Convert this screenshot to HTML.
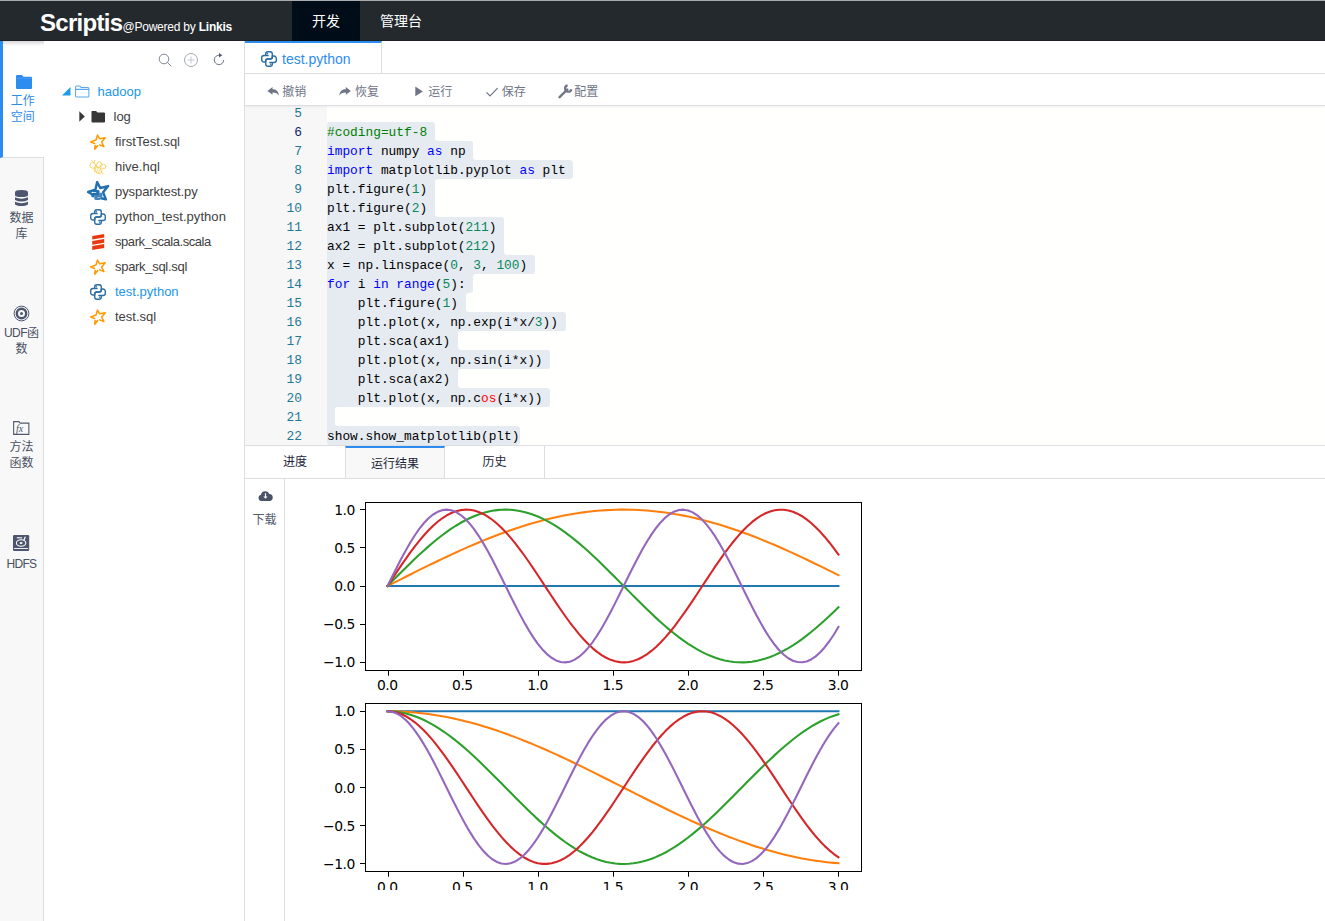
<!DOCTYPE html>
<html lang="zh-CN">
<head>
<meta charset="utf-8">
<title>Scriptis</title>
<style>
*{box-sizing:border-box;margin:0;padding:0}
html,body{width:1325px;height:921px;overflow:hidden;background:#fff}
body{position:relative;font-family:"Liberation Sans","Noto Sans CJK SC",sans-serif;font-size:12px;color:#515a6e}
.abs{position:absolute}
/* header */
#hdr{position:absolute;left:0;top:0;width:1325px;height:41px;background:#24292e;border-top:1px solid #a9abac;border-bottom:1px solid #1c2024}
#logo{position:absolute;left:40px;top:8px;color:#fff;white-space:nowrap;line-height:28px}
#logo b.s{font-size:24px;font-weight:bold;letter-spacing:-0.7px}
#logo span{font-size:12px;letter-spacing:-.22px}
#logo b.l{font-size:12px;font-weight:bold;letter-spacing:-.22px}
.nav{position:absolute;top:0;height:40px;line-height:40px;color:#fff;font-size:14px;text-align:center}
/* sidebar */
#side{position:absolute;left:0;top:41px;width:44px;height:880px;background:#f8f8f9;border-right:1px solid #dcdee2}
.si{position:absolute;left:0;width:43px;text-align:center;font-size:12px;line-height:16px;color:#495060}
.si svg{display:block;margin:0 auto}
#si1{top:0;height:117px;width:44px;background:#fff;border-left:3px solid #2d8cf0;color:#2d8cf0;border-bottom:1px solid #dcdee2}
/* tree */
#tree{position:absolute;left:44px;top:41px;width:201px;height:880px;background:#fff;border-right:1px solid #dcdee2}
.tr{position:absolute;font-size:13px;line-height:25px;height:25px;color:#404040;white-space:nowrap}
.tr.b{color:#2196eb}
.ti{position:absolute}
/* editor area */
#tabbar{position:absolute;left:245px;top:41px;width:1080px;height:33px;border-bottom:1px solid #dcdee2;background:#fff}
#tab1{position:absolute;left:0;top:0;width:137px;height:32px;border-top:2px solid #2d8cf0;border-right:1px solid #dcdee2;color:#2d8cf0;font-size:14px;line-height:30px}
#tool{position:absolute;left:245px;top:74px;width:1080px;height:32px;background:#fff;border-bottom:1px solid #dcdee2;box-shadow:0 1px 2px rgba(0,0,0,.06)}
.tb{position:absolute;top:2.600px;line-height:31px;font-size:12px;color:#6f7586;white-space:nowrap}
#ed{position:absolute;left:245px;top:105px;width:1080px;height:340px;background:#fffffe;overflow:hidden}
#gut{position:absolute;left:0;top:0;width:82px;height:340px;background:#f7f7f7}
.ln,.cl,.sel{position:absolute;height:19px;line-height:19px;font-family:"Liberation Mono","DejaVu Sans Mono",monospace;font-size:12.83px;white-space:pre}
.ln{left:245px;width:57px;text-align:right;color:#237893}
.ln.act{color:#0b216f}
.cl{left:327px;color:#000}
.sel{background:#e5ebf1}
.k{color:#0000ff}.n{color:#09885a}.c{color:#008000}.r{color:#ff0000}
#edwrap{position:absolute;left:0;top:0;width:1325px;height:445px;overflow:hidden}
/* result */
#rtabs{position:absolute;left:245px;top:445px;width:1080px;height:34px;border-top:1px solid #dcdee2;border-bottom:1px solid #dcdee2;background:#fff}
.rt{position:absolute;top:0;width:100px;height:32px;line-height:33.500px;text-align:center;font-size:12px;color:#1c2438}
#rt2{left:100px;background:#f8f8f9;border-top:2px solid #2d8cf0;border-left:1px solid #dcdee2;border-right:1px solid #dcdee2;line-height:33px}
#rt3{left:200px;border-right:1px solid #dcdee2}
#rside{position:absolute;left:245px;top:479px;width:40px;height:442px;border-right:1px solid #dcdee2;text-align:center;font-size:12px;color:#515a6e}
#plotclip{position:absolute;left:0;top:479px;width:1325px;height:411px;overflow:hidden}
</style>
</head>
<body>
<svg width="0" height="0" style="position:absolute"><defs>
<symbol id="py" viewBox="0 0 16 16"><g fill="none" stroke="#2c6da4" stroke-width="1.4" stroke-linejoin="round"><path d="M4.700 4.500V3A2.200 2.200 0 0 1 6.900.8H9.100A2.200 2.200 0 0 1 11.300 3V6A2 2 0 0 1 9.300 8H6.700A2 2 0 0 0 4.700 10V11H3A2.300 2.300 0 0 1 .7 8.700V6.800A2.300 2.300 0 0 1 3 4.500H7.700"/><path d="M11.300 11.500V13A2.200 2.200 0 0 1 9.100 15.200H6.900A2.200 2.200 0 0 1 4.700 13V10A2 2 0 0 1 6.700 8H9.300A2 2 0 0 0 11.300 6V5H13A2.300 2.300 0 0 1 15.300 7.300V9.200A2.300 2.300 0 0 1 13 11.500H8.300"/></g><circle cx="6.400" cy="2.800" r=".7" fill="#2c6da4"/><circle cx="9.600" cy="13.200" r=".7" fill="#2c6da4"/></symbol>
<symbol id="star" viewBox="0 0 24 24"><g fill="none" stroke="#ff9a00" stroke-width="1.600" stroke-linejoin="round" stroke-linecap="round"><path d="M8.100 13.300L3.900 11.700L9.600 9.600L11.200 4.300L13.500 8.300L19.500 7.200L15.600 11.700L18 16.700L13.500 14.800"/><path d="M8.600 15.400L8.300 19.500L11.500 15.600" fill="#ff9a00"/></g></symbol>
<symbol id="pys" viewBox="0 0 28 28"><g fill="none" stroke="#2270b0" stroke-width="2.600" stroke-linejoin="round" stroke-linecap="round"><path d="M8.500 17L3.300 14L11.200 11.500L13.100 3.300L16.400 9.700L24.900 7.600L19.500 14.300L22.500 21.900L17.600 20.700"/></g><g fill="#2270b0" transform="translate(12.800 17.200) scale(1.180) translate(-13.100 -18.500)"><path d="M10.700 14h3.600q1.200 0 1.200 1.200v2.200q0 1.200-1.200 1.200h-2.600q-1 0-1 1v1h-1.500q-1.200 0-1.200-1.200v-1.600q0-1.200 1.200-1.200h3.300v-.5h-2.900v-.9q0-1.200 1.100-1.200z"/><path d="M15.500 23h-3.600q-1.200 0-1.200-1.200v-2.200q0-1.200 1.200-1.200h2.600q1 0 1-1v-1h1.500q1.200 0 1.200 1.200v1.600q0 1.200-1.200 1.200h-3.300v.5h2.900v.9q0 1.200-1.100 1.200z" opacity=".85"/></g></symbol>
<symbol id="hive" viewBox="0 0 24 24"><g fill="none" stroke="#f6c945" stroke-width=".9" stroke-linecap="round" opacity=".85"><circle cx="6.800" cy="10.400" r="2.900"/><path d="M7.300 7.500L5.800 5.400M8.200 7.400L9 5.200"/><ellipse cx="13" cy="9.600" rx="2.200" ry="3" transform="rotate(25 13 9.600)"/><ellipse cx="17.300" cy="11.500" rx="2.600" ry="2.300"/><ellipse cx="12" cy="15.200" rx="4.300" ry="2.900" transform="rotate(35 12 15.200)"/><path d="M10.300 12.200L8.600 16.200M12.500 12.600L10.300 17.600M14.600 13.800L12.400 18.300M15.600 17L17.200 18.800"/></g></symbol>
<symbol id="scala" viewBox="0 0 24 24"><g fill="#e8380d"><path d="M6.250 6L18.200 3.900V7.550L6.250 9.600z"/><path d="M6.250 10.900L18.200 9V12.800L6.250 14.800z"/><path d="M6.250 16.100L18.200 14V18L6.250 20z"/></g></symbol>
</defs></svg>
<div id="edwrap">
<div id="ed"><div id="gut"></div></div>
<div class="abs" style="left:327px;top:293px;width:1px;height:114px;background:#d3d3d3"></div>
<div class="ln" style="top:104px">5</div>
<div class="ln act" style="top:123px">6</div>
<div class="sel" style="top:122px;left:327px;width:107.8px;border-radius:3px 3px 0px 0px"></div>
<div class="abs" style="left:434.8px;top:138px;width:3px;height:3px;background:radial-gradient(circle at 100% 0%,rgba(229,235,241,0) 2.5px,#e5ebf1 3.5px)"></div>
<div class="cl" style="top:123px"><span class="c">#coding=utf-8</span></div>
<div class="ln" style="top:142px">7</div>
<div class="sel" style="top:141px;left:327px;width:146.3px;border-radius:0px 3px 0px 0px"></div>
<div class="abs" style="left:473.3px;top:157px;width:3px;height:3px;background:radial-gradient(circle at 100% 0%,rgba(229,235,241,0) 2.5px,#e5ebf1 3.5px)"></div>
<div class="cl" style="top:142px"><span class="k">import</span> numpy <span class="k">as</span> np</div>
<div class="ln" style="top:161px">8</div>
<div class="sel" style="top:160px;left:327px;width:246.4px;border-radius:0px 3px 3px 0px"></div>
<div class="cl" style="top:161px"><span class="k">import</span> matplotlib.pyplot <span class="k">as</span> plt</div>
<div class="ln" style="top:180px">9</div>
<div class="sel" style="top:179px;left:327px;width:107.8px;border-radius:0px 0px 0px 0px"></div>
<div class="abs" style="left:434.8px;top:179px;width:3px;height:3px;background:radial-gradient(circle at 100% 100%,rgba(229,235,241,0) 2.5px,#e5ebf1 3.5px)"></div>
<div class="cl" style="top:180px">plt.figure(<span class="n">1</span>)</div>
<div class="ln" style="top:199px">10</div>
<div class="sel" style="top:198px;left:327px;width:107.8px;border-radius:0px 0px 0px 0px"></div>
<div class="abs" style="left:434.8px;top:214px;width:3px;height:3px;background:radial-gradient(circle at 100% 0%,rgba(229,235,241,0) 2.5px,#e5ebf1 3.5px)"></div>
<div class="cl" style="top:199px">plt.figure(<span class="n">2</span>)</div>
<div class="ln" style="top:218px">11</div>
<div class="sel" style="top:217px;left:327px;width:177.1px;border-radius:0px 3px 0px 0px"></div>
<div class="cl" style="top:218px">ax1 = plt.subplot(<span class="n">211</span>)</div>
<div class="ln" style="top:237px">12</div>
<div class="sel" style="top:236px;left:327px;width:177.1px;border-radius:0px 0px 0px 0px"></div>
<div class="abs" style="left:504.1px;top:252px;width:3px;height:3px;background:radial-gradient(circle at 100% 0%,rgba(229,235,241,0) 2.5px,#e5ebf1 3.5px)"></div>
<div class="cl" style="top:237px">ax2 = plt.subplot(<span class="n">212</span>)</div>
<div class="ln" style="top:256px">13</div>
<div class="sel" style="top:255px;left:327px;width:207.9px;border-radius:0px 3px 3px 0px"></div>
<div class="cl" style="top:256px">x = np.linspace(<span class="n">0</span>, <span class="n">3</span>, <span class="n">100</span>)</div>
<div class="ln" style="top:275px">14</div>
<div class="sel" style="top:274px;left:327px;width:146.3px;border-radius:0px 0px 3px 0px"></div>
<div class="abs" style="left:473.3px;top:274px;width:3px;height:3px;background:radial-gradient(circle at 100% 100%,rgba(229,235,241,0) 2.5px,#e5ebf1 3.5px)"></div>
<div class="cl" style="top:275px"><span class="k">for</span> i <span class="k">in</span> <span class="k">range</span>(<span class="n">5</span>):</div>
<div class="ln" style="top:294px">15</div>
<div class="sel" style="top:293px;left:327px;width:138.6px;border-radius:0px 0px 0px 0px"></div>
<div class="abs" style="left:465.6px;top:309px;width:3px;height:3px;background:radial-gradient(circle at 100% 0%,rgba(229,235,241,0) 2.5px,#e5ebf1 3.5px)"></div>
<div class="abs" style="left:465.6px;top:293px;width:3px;height:3px;background:radial-gradient(circle at 100% 100%,rgba(229,235,241,0) 2.5px,#e5ebf1 3.5px)"></div>
<div class="cl" style="top:294px">    plt.figure(<span class="n">1</span>)</div>
<div class="ln" style="top:313px">16</div>
<div class="sel" style="top:312px;left:327px;width:238.7px;border-radius:0px 3px 3px 0px"></div>
<div class="cl" style="top:313px">    plt.plot(x, np.exp(i*x/<span class="n">3</span>))</div>
<div class="ln" style="top:332px">17</div>
<div class="sel" style="top:331px;left:327px;width:130.9px;border-radius:0px 0px 0px 0px"></div>
<div class="abs" style="left:457.9px;top:347px;width:3px;height:3px;background:radial-gradient(circle at 100% 0%,rgba(229,235,241,0) 2.5px,#e5ebf1 3.5px)"></div>
<div class="abs" style="left:457.9px;top:331px;width:3px;height:3px;background:radial-gradient(circle at 100% 100%,rgba(229,235,241,0) 2.5px,#e5ebf1 3.5px)"></div>
<div class="cl" style="top:332px">    plt.sca(ax1)</div>
<div class="ln" style="top:351px">18</div>
<div class="sel" style="top:350px;left:327px;width:223.3px;border-radius:0px 3px 3px 0px"></div>
<div class="cl" style="top:351px">    plt.plot(x, np.sin(i*x))</div>
<div class="ln" style="top:370px">19</div>
<div class="sel" style="top:369px;left:327px;width:130.9px;border-radius:0px 0px 0px 0px"></div>
<div class="abs" style="left:457.9px;top:385px;width:3px;height:3px;background:radial-gradient(circle at 100% 0%,rgba(229,235,241,0) 2.5px,#e5ebf1 3.5px)"></div>
<div class="abs" style="left:457.9px;top:369px;width:3px;height:3px;background:radial-gradient(circle at 100% 100%,rgba(229,235,241,0) 2.5px,#e5ebf1 3.5px)"></div>
<div class="cl" style="top:370px">    plt.sca(ax2)</div>
<div class="ln" style="top:389px">20</div>
<div class="sel" style="top:388px;left:327px;width:223.3px;border-radius:0px 3px 3px 0px"></div>
<div class="cl" style="top:389px">    plt.plot(x, np.c<span class="r">os</span>(i*x))</div>
<div class="ln" style="top:408px">21</div>
<div class="sel" style="top:407px;left:327px;width:7.7px;border-radius:0px 0px 0px 0px"></div>
<div class="abs" style="left:334.7px;top:423px;width:3px;height:3px;background:radial-gradient(circle at 100% 0%,rgba(229,235,241,0) 2.5px,#e5ebf1 3.5px)"></div>
<div class="abs" style="left:334.7px;top:407px;width:3px;height:3px;background:radial-gradient(circle at 100% 100%,rgba(229,235,241,0) 2.5px,#e5ebf1 3.5px)"></div>
<div class="ln" style="top:427px">22</div>
<div class="sel" style="top:426px;left:327px;width:192.5px;border-radius:0px 3px 3px 3px"></div>
<div class="cl" style="top:427px">show.show_matplotlib(plt)</div>
</div>
<div id="hdr">
  <div id="logo"><b class="s">Scriptis</b><span>@Powered by </span><b class="l">Linkis</b></div>
  <div class="nav" style="left:292px;width:68px;background:#000c17">开发</div>
  <div class="nav" style="left:361px;width:80px">管理台</div>
</div>

<div id="side">
  <div class="si" id="si1"><div style="position:absolute;left:0;top:0;width:41px;height:6px;background:linear-gradient(to bottom,rgba(0,0,0,.16),rgba(0,0,0,.04) 60%,rgba(0,0,0,0))"></div><div style="height:34px"></div>
    <svg width="16.200" height="14" viewBox="0 0 17 14" preserveAspectRatio="none" style="margin-left:12.800px"><path d="M1.200 0h5l1.600 1.800h8q1.200 0 1.200 1.200v9.800q0 1.200-1.200 1.200H1.200Q0 14 0 12.800V1.200Q0 0 1.200 0z" fill="#2d8cf0"/><path d="M.3 3.300H16.700" stroke="#5ba6f4" stroke-width=".6"/></svg>
    <div style="margin-top:4px;margin-left:-1.400px">工作<br>空间</div></div>
  <div class="si" style="top:148.800px"><svg width="13" height="16.200" viewBox="0 0 13 16.200"><g fill="#4d566e"><path d="M0 2.200Q0 0 6.500 0Q13 0 13 2.200V5.200Q13 7 6.500 7Q0 7 0 5.200z"/><path d="M0 7.300Q3 8.700 6.500 8.700Q10 8.700 13 7.300V10Q10 11.600 6.500 11.600Q3 11.600 0 10z"/><path d="M0 11.800Q3 13.200 6.500 13.200Q10 13.200 13 11.800V14.400Q10 16.200 6.500 16.200Q3 16.200 0 14.400z"/></g></svg>
    <div style="margin-top:4px">数据<br>库</div></div>
  <div class="si" style="top:263.800px"><svg width="17" height="17" viewBox="0 0 17 17"><g fill="none" stroke="#4d566e"><circle cx="8.500" cy="8.500" r="7.400" stroke-width="1"/><circle cx="8.500" cy="8.500" r="4.700" stroke-width="2.400"/></g><circle cx="8.500" cy="8.500" r="1.500" fill="#4d566e"/></svg>
    <div style="margin-top:3.500px"><span style="letter-spacing:-.6px">UDF</span>函<br>数</div></div>
  <div class="si" style="top:380px"><svg width="16.500" height="14" viewBox="0 0 18 15" preserveAspectRatio="none"><path d="M.7 14.300V.7h5.800l1.300 1.600h9.500v12z" fill="none" stroke="#515a6e" stroke-width="1.2"/><text x="3.300" y="12" font-family="'Liberation Serif',serif" font-style="italic" font-size="11" fill="#4d566e">fx</text></svg>
    <div style="margin-top:4px">方法<br>函数</div></div>
  <div class="si" style="top:494px"><svg width="16.200" height="16" viewBox="0 0 16.200 16"><rect x="0" y="0" width="16.200" height="16" rx="1.300" fill="#4d566e"/><g fill="none" stroke="#fff"><path d="M1 13.500H15.200" stroke-width=".9"/><ellipse cx="8.100" cy="8" rx="4.700" ry="3.300" stroke-width="1.100"/><path d="M3.800 2.800H9.200" stroke-width="1.100"/><path d="M12.300 1.800L10.800 5.400" stroke-width="1.200"/></g><ellipse cx="8.100" cy="8" rx="1.500" ry=".9" fill="#fff"/></svg>
    <div style="margin-top:4.500px;letter-spacing:-.7px">HDFS</div></div>
</div>

<div id="tree"><div style="position:absolute;left:1px;top:0">
<svg class="ti" style="left:112px;top:11px" width="16" height="16" viewBox="0 0 16 16"><g fill="none" stroke="#808695" stroke-width="1"><circle cx="7" cy="7" r="4.800"/><path d="M10.500 10.500L14 14" stroke-linecap="round"/></g></svg>
<svg class="ti" style="left:138px;top:11px" width="16" height="16" viewBox="0 0 16 16"><g fill="none" stroke="#a4a9b5" stroke-width="1"><circle cx="8" cy="8" r="6.500"/><path d="M8 4.500V11.500M4.500 8H11.500" stroke="#c5c8ce"/></g></svg>
<svg class="ti" style="left:166px;top:11px" width="16" height="16" viewBox="0 0 16 16"><g fill="none" stroke="#6b7182" stroke-width="1"><path d="M8.800 3.300A4.700 4.700 0 1 0 12.700 8"/></g><path d="M8 .9L11.300 3.300L8 5.600z" fill="#515a6e"/></svg>
<div class="tr b" style="left:52.5px;top:38px">hadoop</div>
<svg class="ti" style="left:17.0px;top:46.2px" width="9" height="9" viewBox="0 0 9 9"><path d="M8.500 0V8.500H0z" fill="#1e9bea"/></svg>
<svg class="ti" style="left:29.8px;top:44.0px" width="14.800" height="13.400" viewBox="0 0 16 14" preserveAspectRatio="none"><path d="M.6 2.200Q.6 1.100 1.700 1.100H5.200L6.600 2.600H13.900Q15 2.600 15 3.700V11.400Q15 12.500 13.900 12.500H1.700Q.6 12.500.6 11.400zM.6 4.600H15" fill="none" stroke="#5aa6f2" stroke-width="1.100"/></svg>
<div class="tr " style="left:68.5px;top:63px">log</div>
<svg class="ti" style="left:34.0px;top:70.0px" width="7" height="11" viewBox="0 0 7 11"><path d="M.3.300L5.800 5.500L.3 10.700z" fill="#3a3a3a"/></svg>
<svg class="ti" style="left:45.5px;top:70.0px" width="14.600" height="12" viewBox="0 0 15 12" preserveAspectRatio="none"><path d="M1 0H5.200L6.700 1.500H13.500Q14.500 1.500 14.500 2.500V10.500Q14.500 11.500 13.500 11.500H1.500Q.5 11.500.5 10.500V.8Q.5 0 1 0z" fill="#363636"/></svg>
<div class="tr " style="left:70.0px;top:88px">firstTest.sql</div>
<svg class="ti" style="left:42.0px;top:89.6px" width="22.500" height="22.500"><use href="#star"/></svg>
<div class="tr " style="left:70.0px;top:113px">hive.hql</div>
<svg class="ti" style="left:41.0px;top:113.8px" width="24" height="24"><use href="#hive"/></svg>
<div class="tr " style="left:70.0px;top:138px;letter-spacing:-.08px">pysparktest.py</div>
<svg class="ti" style="left:40.0px;top:138.0px" width="26" height="26"><use href="#pys"/></svg>
<div class="tr " style="left:70.0px;top:163px;letter-spacing:.06px">python_test.python</div>
<svg class="ti" style="left:45.0px;top:167.8px" width="16" height="16"><use href="#py"/></svg>
<div class="tr " style="left:70.0px;top:188px;letter-spacing:-.44px">spark_scala.scala</div>
<svg class="ti" style="left:41.0px;top:188.8px" width="24" height="24"><use href="#scala"/></svg>
<div class="tr " style="left:70.0px;top:213px;letter-spacing:-.3px">spark_sql.sql</div>
<svg class="ti" style="left:42.0px;top:214.6px" width="22.500" height="22.500"><use href="#star"/></svg>
<div class="tr b" style="left:70.0px;top:238px">test.python</div>
<svg class="ti" style="left:45.0px;top:242.8px" width="16" height="16"><use href="#py"/></svg>
<div class="tr " style="left:70.0px;top:263px">test.sql</div>
<svg class="ti" style="left:42.0px;top:264.6px" width="22.500" height="22.500"><use href="#star"/></svg>
</div></div>

<div id="tabbar"><div id="tab1"><svg class="abs" style="left:16px;top:8px" width="16" height="16"><use href="#py"/></svg><span style="position:absolute;left:37px;top:1.200px">test.python</span></div></div>
<div id="tool">
<svg class="abs" style="left:22.0px;top:12.0px" width="13" height="11" viewBox="0 0 13 11"><path d="M.4 4.900L5.500 1.100V3.200C9 3.200 11.700 5 11.900 9.800C10.600 7.400 8.800 6.600 5.500 6.600V8.700z" fill="#6f7586"/></svg>
<div class="tb" style="left:37.3px">撤销</div>
<svg class="abs" style="left:94.4px;top:12.0px" width="13" height="11" viewBox="0 0 13 11"><path transform="translate(12.300 0) scale(-1 1)" d="M.4 4.900L5.500 1.100V3.200C9 3.200 11.700 5 11.900 9.800C10.600 7.400 8.800 6.600 5.500 6.600V8.700z" fill="#6f7586"/></svg>
<div class="tb" style="left:110.1px">恢复</div>
<svg class="abs" style="left:170.0px;top:12.3px" width="9" height="11" viewBox="0 0 9 11"><path d="M.3.600L7.800 5.400L.3 10.200z" fill="#6f7586"/></svg>
<div class="tb" style="left:183.3px">运行</div>
<svg class="abs" style="left:240.8px;top:13.0px" width="14" height="10" viewBox="0 0 14 10"><path d="M.5 5.300L4 8.800L11.600 1.200" fill="none" stroke="#6f7586" stroke-width="1.200"/></svg>
<div class="tb" style="left:256.7px">保存</div>
<svg class="abs" style="left:313.0px;top:10.2px" width="15" height="15" viewBox="0 0 15 15"><path d="M1.600 13.200L9.300 5.500" stroke="#6f7586" stroke-width="2.400" stroke-linecap="round"/><path d="M9.600 1.400A3.200 3.200 0 1 0 13.400 5.200" fill="none" stroke="#6f7586" stroke-width="2.200"/></svg>
<div class="tb" style="left:329.2px">配置</div>
</div>

<div id="rtabs">
  <div class="rt" id="rt1" style="left:0">进度</div>
  <div class="rt" id="rt2">运行结果</div>
  <div class="rt" id="rt3">历史</div>
</div>
<div id="rside"><svg class="abs" style="left:12.600px;top:10.500px" width="15" height="11.500" viewBox="0 0 15 11"><path d="M3.200 10.800A3.200 3.200 0 0 1 3 4.500A4.300 4.300 0 0 1 11.300 3.800A3.500 3.500 0 0 1 11.200 10.800z" fill="#4a5268"/><path d="M6.900 3h1.200v3.200h1.500L7.500 8.600L5.400 6.200h1.500z" fill="#fff"/></svg><div style="position:absolute;left:0;top:34px;width:39px;line-height:14px">下载</div></div>
<div id="plotclip"><div style="position:absolute;left:0;top:-479px;width:1325px;height:921px">
<svg class="plot" width="1325" height="921" viewBox="0 0 1325 921" style="position:absolute;left:0;top:0">
<g fill="none" stroke-width="2.08" stroke-linejoin="round" stroke-linecap="square">
<polyline stroke="#1f77b4" points="387.55,586.00 392.10,586.00 396.65,586.00 401.21,586.00 405.76,586.00 410.32,586.00 414.87,586.00 419.43,586.00 423.98,586.00 428.54,586.00 433.09,586.00 437.65,586.00 442.20,586.00 446.76,586.00 451.31,586.00 455.87,586.00 460.42,586.00 464.97,586.00 469.53,586.00 474.08,586.00 478.64,586.00 483.19,586.00 487.75,586.00 492.30,586.00 496.86,586.00 501.41,586.00 505.97,586.00 510.52,586.00 515.08,586.00 519.63,586.00 524.18,586.00 528.74,586.00 533.29,586.00 537.85,586.00 542.40,586.00 546.96,586.00 551.51,586.00 556.07,586.00 560.62,586.00 565.18,586.00 569.73,586.00 574.29,586.00 578.84,586.00 583.39,586.00 587.95,586.00 592.50,586.00 597.06,586.00 601.61,586.00 606.17,586.00 610.72,586.00 615.28,586.00 619.83,586.00 624.39,586.00 628.94,586.00 633.50,586.00 638.05,586.00 642.61,586.00 647.16,586.00 651.71,586.00 656.27,586.00 660.82,586.00 665.38,586.00 669.93,586.00 674.49,586.00 679.04,586.00 683.60,586.00 688.15,586.00 692.71,586.00 697.26,586.00 701.82,586.00 706.37,586.00 710.92,586.00 715.48,586.00 720.03,586.00 724.59,586.00 729.14,586.00 733.70,586.00 738.25,586.00 742.81,586.00 747.36,586.00 751.92,586.00 756.47,586.00 761.03,586.00 765.58,586.00 770.13,586.00 774.69,586.00 779.24,586.00 783.80,586.00 788.35,586.00 792.91,586.00 797.46,586.00 802.02,586.00 806.57,586.00 811.13,586.00 815.68,586.00 820.24,586.00 824.79,586.00 829.35,586.00 833.90,586.00 838.45,586.00"/>
<polyline stroke="#ff7f0e" points="387.55,586.00 392.10,583.69 396.65,581.37 401.21,579.07 405.76,576.77 410.32,574.47 414.87,572.19 419.43,569.92 423.98,567.67 428.54,565.43 433.09,563.21 437.65,561.01 442.20,558.84 446.76,556.69 451.31,554.57 455.87,552.47 460.42,550.41 464.97,548.38 469.53,546.38 474.08,544.42 478.64,542.50 483.19,540.62 487.75,538.78 492.30,536.98 496.86,535.23 501.41,533.53 505.97,531.87 510.52,530.26 515.08,528.71 519.63,527.20 524.18,525.75 528.74,524.36 533.29,523.02 537.85,521.74 542.40,520.52 546.96,519.36 551.51,518.26 556.07,517.22 560.62,516.25 565.18,515.34 569.73,514.50 574.29,513.72 578.84,513.00 583.39,512.36 587.95,511.78 592.50,511.27 597.06,510.83 601.61,510.45 606.17,510.15 610.72,509.92 615.28,509.75 619.83,509.66 624.39,509.64 628.94,509.68 633.50,509.80 638.05,509.99 642.61,510.24 647.16,510.57 651.71,510.96 656.27,511.43 660.82,511.96 665.38,512.56 669.93,513.23 674.49,513.96 679.04,514.77 683.60,515.63 688.15,516.56 692.71,517.56 697.26,518.62 701.82,519.73 706.37,520.91 710.92,522.15 715.48,523.45 720.03,524.81 724.59,526.22 729.14,527.69 733.70,529.21 738.25,530.78 742.81,532.41 747.36,534.08 751.92,535.80 756.47,537.57 761.03,539.38 765.58,541.23 770.13,543.13 774.69,545.06 779.24,547.03 783.80,549.04 788.35,551.08 792.91,553.15 797.46,555.26 802.02,557.39 806.57,559.55 811.13,561.73 815.68,563.94 820.24,566.16 824.79,568.40 829.35,570.66 833.90,572.94 838.45,575.22"/>
<polyline stroke="#2ca02c" points="387.55,586.00 392.10,581.37 396.65,576.77 401.21,572.19 405.76,567.67 410.32,563.21 414.87,558.84 419.43,554.57 423.98,550.41 428.54,546.38 433.09,542.50 437.65,538.78 442.20,535.23 446.76,531.87 451.31,528.71 455.87,525.75 460.42,523.02 464.97,520.52 469.53,518.26 474.08,516.25 478.64,514.50 483.19,513.00 487.75,511.78 492.30,510.83 496.86,510.15 501.41,509.75 505.97,509.64 510.52,509.80 515.08,510.24 519.63,510.96 524.18,511.96 528.74,513.23 533.29,514.77 537.85,516.56 542.40,518.62 546.96,520.91 551.51,523.45 556.07,526.22 560.62,529.21 565.18,532.41 569.73,535.80 574.29,539.38 578.84,543.13 583.39,547.03 587.95,551.08 592.50,555.26 597.06,559.55 601.61,563.94 606.17,568.40 610.72,572.94 615.28,577.52 619.83,582.13 624.39,586.76 628.94,591.38 633.50,595.99 638.05,600.55 642.61,605.07 647.16,609.51 651.71,613.87 656.27,618.12 660.82,622.26 665.38,626.26 669.93,630.12 674.49,633.81 679.04,637.33 683.60,640.66 688.15,643.79 692.71,646.71 697.26,649.40 701.82,651.87 706.37,654.08 710.92,656.05 715.48,657.77 720.03,659.22 724.59,660.40 729.14,661.30 733.70,661.93 738.25,662.28 742.81,662.36 747.36,662.15 751.92,661.66 756.47,660.89 761.03,659.85 765.58,658.54 770.13,656.96 774.69,655.12 779.24,653.03 783.80,650.69 788.35,648.11 792.91,645.30 797.46,642.28 802.02,639.05 806.57,635.63 811.13,632.02 815.68,628.25 820.24,624.31 824.79,620.24 829.35,616.05 833.90,611.74 838.45,607.34"/>
<polyline stroke="#d62728" points="387.55,586.00 392.10,579.07 396.65,572.19 401.21,565.43 405.76,558.84 410.32,552.47 414.87,546.38 419.43,540.62 423.98,535.23 428.54,530.26 433.09,525.75 437.65,521.74 442.20,518.26 446.76,515.34 451.31,513.00 455.87,511.27 460.42,510.15 464.97,509.66 469.53,509.80 474.08,510.57 478.64,511.96 483.19,513.96 487.75,516.56 492.30,519.73 496.86,523.45 501.41,527.69 505.97,532.41 510.52,537.57 515.08,543.13 519.63,549.04 524.18,555.26 528.74,561.73 533.29,568.40 537.85,575.22 542.40,582.13 546.96,589.07 551.51,595.99 556.07,602.82 560.62,609.51 565.18,616.01 569.73,622.26 574.29,628.21 578.84,633.81 583.39,639.02 587.95,643.79 592.50,648.08 597.06,651.87 601.61,655.10 606.17,657.77 610.72,659.84 615.28,661.30 619.83,662.14 624.39,662.36 628.94,661.94 633.50,660.89 638.05,659.23 642.61,656.96 647.16,654.10 651.71,650.69 656.27,646.73 660.82,642.28 665.38,637.36 669.93,632.02 674.49,626.30 679.04,620.24 683.60,613.91 688.15,607.34 692.71,600.59 697.26,593.73 701.82,586.80 706.37,579.86 710.92,572.98 715.48,566.20 720.03,559.59 724.59,553.19 729.14,547.07 733.70,541.26 738.25,535.83 742.81,530.81 747.36,526.25 751.92,522.18 756.47,518.63 761.03,515.65 765.58,513.24 770.13,511.44 774.69,510.25 779.24,509.69 783.80,509.75 788.35,510.45 792.91,511.77 797.46,513.70 802.02,516.23 806.57,519.34 811.13,523.00 815.68,527.18 820.24,531.84 824.79,536.95 829.35,542.47 833.90,548.34 838.45,554.53"/>
<polyline stroke="#9467bd" points="387.55,586.00 392.10,576.77 396.65,567.67 401.21,558.84 405.76,550.41 410.32,542.50 414.87,535.23 419.43,528.71 423.98,523.02 428.54,518.26 433.09,514.50 437.65,511.78 442.20,510.15 446.76,509.64 451.31,510.24 455.87,511.96 460.42,514.77 464.97,518.62 469.53,523.45 474.08,529.21 478.64,535.80 483.19,543.13 487.75,551.08 492.30,559.55 496.86,568.40 501.41,577.52 505.97,586.76 510.52,595.99 515.08,605.07 519.63,613.87 524.18,622.26 528.74,630.12 533.29,637.33 537.85,643.79 542.40,649.40 546.96,654.08 551.51,657.77 556.07,660.40 560.62,661.93 565.18,662.36 569.73,661.66 574.29,659.85 578.84,656.96 583.39,653.03 587.95,648.11 592.50,642.28 597.06,635.63 601.61,628.25 606.17,620.24 610.72,611.74 615.28,602.86 619.83,593.73 624.39,584.48 628.94,575.26 633.50,566.20 638.05,557.43 642.61,549.08 647.16,541.26 651.71,534.11 656.27,527.72 660.82,522.18 665.38,517.58 669.93,513.98 674.49,511.44 679.04,509.99 683.60,509.66 688.15,510.45 692.71,512.35 697.26,515.33 701.82,519.34 706.37,524.34 710.92,530.23 715.48,536.95 720.03,544.39 724.59,552.44 729.14,560.98 733.70,569.88 738.25,579.03 742.81,588.27 747.36,597.49 751.92,606.53 756.47,615.27 761.03,623.59 765.58,631.35 770.13,638.44 774.69,644.77 779.24,650.24 783.80,654.76 788.35,658.27 792.91,660.72 797.46,662.08 802.02,662.32 806.57,661.44 811.13,659.45 815.68,656.38 820.24,652.29 824.79,647.21 829.35,641.25 833.90,634.47 838.45,626.97"/>
</g>
<rect x="365.5" y="502.5" width="496.0" height="168.0" fill="none" stroke="#000" stroke-width="1"/>
<g stroke="#000" stroke-width="1" font-family="'DejaVu Sans', sans-serif" font-size="13.89" letter-spacing="-0.5" fill="#000">
<line x1="388.5" y1="670.5" x2="388.5" y2="675.7"/>
<text stroke="none" text-anchor="middle" x="387.25" y="690">0.0</text>
<line x1="463.5" y1="670.5" x2="463.5" y2="675.7"/>
<text stroke="none" text-anchor="middle" x="462.40" y="690">0.5</text>
<line x1="538.5" y1="670.5" x2="538.5" y2="675.7"/>
<text stroke="none" text-anchor="middle" x="537.55" y="690">1.0</text>
<line x1="613.5" y1="670.5" x2="613.5" y2="675.7"/>
<text stroke="none" text-anchor="middle" x="612.70" y="690">1.5</text>
<line x1="688.5" y1="670.5" x2="688.5" y2="675.7"/>
<text stroke="none" text-anchor="middle" x="687.85" y="690">2.0</text>
<line x1="763.5" y1="670.5" x2="763.5" y2="675.7"/>
<text stroke="none" text-anchor="middle" x="763.00" y="690">2.5</text>
<line x1="838.5" y1="670.5" x2="838.5" y2="675.7"/>
<text stroke="none" text-anchor="middle" x="838.15" y="690">3.0</text>
<line x1="360.0" y1="662.5" x2="365.5" y2="662.5"/>
<text stroke="none" text-anchor="end" x="354.78" y="667">−1.0</text>
<line x1="360.0" y1="624.5" x2="365.5" y2="624.5"/>
<text stroke="none" text-anchor="end" x="354.78" y="629">−0.5</text>
<line x1="360.0" y1="586.5" x2="365.5" y2="586.5"/>
<text stroke="none" text-anchor="end" x="354.78" y="591">0.0</text>
<line x1="360.0" y1="547.5" x2="365.5" y2="547.5"/>
<text stroke="none" text-anchor="end" x="354.78" y="553">0.5</text>
<line x1="360.0" y1="509.5" x2="365.5" y2="509.5"/>
<text stroke="none" text-anchor="end" x="354.78" y="515">1.0</text>
</g>
<g fill="none" stroke-width="2.08" stroke-linejoin="round" stroke-linecap="square">
<polyline stroke="#1f77b4" points="387.55,711.24 392.10,711.24 396.65,711.24 401.21,711.24 405.76,711.24 410.32,711.24 414.87,711.24 419.43,711.24 423.98,711.24 428.54,711.24 433.09,711.24 437.65,711.24 442.20,711.24 446.76,711.24 451.31,711.24 455.87,711.24 460.42,711.24 464.97,711.24 469.53,711.24 474.08,711.24 478.64,711.24 483.19,711.24 487.75,711.24 492.30,711.24 496.86,711.24 501.41,711.24 505.97,711.24 510.52,711.24 515.08,711.24 519.63,711.24 524.18,711.24 528.74,711.24 533.29,711.24 537.85,711.24 542.40,711.24 546.96,711.24 551.51,711.24 556.07,711.24 560.62,711.24 565.18,711.24 569.73,711.24 574.29,711.24 578.84,711.24 583.39,711.24 587.95,711.24 592.50,711.24 597.06,711.24 601.61,711.24 606.17,711.24 610.72,711.24 615.28,711.24 619.83,711.24 624.39,711.24 628.94,711.24 633.50,711.24 638.05,711.24 642.61,711.24 647.16,711.24 651.71,711.24 656.27,711.24 660.82,711.24 665.38,711.24 669.93,711.24 674.49,711.24 679.04,711.24 683.60,711.24 688.15,711.24 692.71,711.24 697.26,711.24 701.82,711.24 706.37,711.24 710.92,711.24 715.48,711.24 720.03,711.24 724.59,711.24 729.14,711.24 733.70,711.24 738.25,711.24 742.81,711.24 747.36,711.24 751.92,711.24 756.47,711.24 761.03,711.24 765.58,711.24 770.13,711.24 774.69,711.24 779.24,711.24 783.80,711.24 788.35,711.24 792.91,711.24 797.46,711.24 802.02,711.24 806.57,711.24 811.13,711.24 815.68,711.24 820.24,711.24 824.79,711.24 829.35,711.24 833.90,711.24 838.45,711.24"/>
<polyline stroke="#ff7f0e" points="387.55,711.24 392.10,711.27 396.65,711.38 401.21,711.55 405.76,711.80 410.32,712.11 414.87,712.50 419.43,712.95 423.98,713.47 428.54,714.06 433.09,714.72 437.65,715.44 442.20,716.23 446.76,717.09 451.31,718.01 455.87,718.99 460.42,720.04 464.97,721.15 469.53,722.32 474.08,723.55 478.64,724.84 483.19,726.18 487.75,727.59 492.30,729.05 496.86,730.56 501.41,732.12 505.97,733.74 510.52,735.40 515.08,737.11 519.63,738.87 524.18,740.68 528.74,742.52 533.29,744.41 537.85,746.34 542.40,748.31 546.96,750.31 551.51,752.34 556.07,754.41 560.62,756.51 565.18,758.64 569.73,760.79 574.29,762.97 578.84,765.17 583.39,767.40 587.95,769.64 592.50,771.89 597.06,774.16 601.61,776.45 606.17,778.74 610.72,781.04 615.28,783.35 619.83,785.67 624.39,787.98 628.94,790.29 633.50,792.60 638.05,794.91 642.61,797.21 647.16,799.50 651.71,801.78 656.27,804.05 660.82,806.30 665.38,808.53 669.93,810.75 674.49,812.94 679.04,815.11 683.60,817.26 688.15,819.38 692.71,821.47 697.26,823.53 701.82,825.55 706.37,827.54 710.92,829.50 715.48,831.41 720.03,833.29 724.59,835.12 729.14,836.91 733.70,838.65 738.25,840.35 742.81,842.00 747.36,843.60 751.92,845.14 756.47,846.64 761.03,848.08 765.58,849.46 770.13,850.79 774.69,852.06 779.24,853.27 783.80,854.42 788.35,855.51 792.91,856.54 797.46,857.50 802.02,858.40 806.57,859.24 811.13,860.00 815.68,860.71 820.24,861.34 824.79,861.91 829.35,862.41 833.90,862.84 838.45,863.20"/>
<polyline stroke="#2ca02c" points="387.55,711.24 392.10,711.38 396.65,711.80 401.21,712.50 405.76,713.47 410.32,714.72 414.87,716.23 419.43,718.01 423.98,720.04 428.54,722.32 433.09,724.84 437.65,727.59 442.20,730.56 446.76,733.74 451.31,737.11 455.87,740.68 460.42,744.41 464.97,748.31 469.53,752.34 474.08,756.51 478.64,760.79 483.19,765.17 487.75,769.64 492.30,774.16 496.86,778.74 501.41,783.35 505.97,787.98 510.52,792.60 515.08,797.21 519.63,801.78 524.18,806.30 528.74,810.75 533.29,815.11 537.85,819.38 542.40,823.53 546.96,827.54 551.51,831.41 556.07,835.12 560.62,838.65 565.18,842.00 569.73,845.14 574.29,848.08 578.84,850.79 583.39,853.27 587.95,855.51 592.50,857.50 597.06,859.24 601.61,860.71 606.17,861.91 610.72,862.84 615.28,863.49 619.83,863.87 624.39,863.96 628.94,863.77 633.50,863.31 638.05,862.56 642.61,861.55 647.16,860.25 651.71,858.70 656.27,856.88 660.82,854.81 665.38,852.49 669.93,849.93 674.49,847.14 679.04,844.14 683.60,840.92 688.15,837.51 692.71,833.92 697.26,830.16 701.82,826.24 706.37,822.18 710.92,817.99 715.48,813.70 720.03,809.30 724.59,804.83 729.14,800.29 733.70,795.70 738.25,791.09 742.81,786.46 747.36,781.84 751.92,777.24 756.47,772.68 761.03,768.17 765.58,763.73 770.13,759.38 774.69,755.13 779.24,751.01 783.80,747.01 788.35,743.17 792.91,739.49 797.46,735.99 802.02,732.67 806.57,729.56 811.13,726.66 815.68,723.99 820.24,721.54 824.79,719.34 829.35,717.40 833.90,715.70 838.45,714.28"/>
<polyline stroke="#d62728" points="387.55,711.24 392.10,711.55 396.65,712.50 401.21,714.06 405.76,716.23 410.32,718.99 414.87,722.32 419.43,726.18 423.98,730.56 428.54,735.40 433.09,740.68 437.65,746.34 442.20,752.34 446.76,758.64 451.31,765.17 455.87,771.89 460.42,778.74 464.97,785.67 469.53,792.60 474.08,799.50 478.64,806.30 483.19,812.94 487.75,819.38 492.30,825.55 496.86,831.41 501.41,836.91 505.97,842.00 510.52,846.64 515.08,850.79 519.63,854.42 524.18,857.50 528.74,860.00 533.29,861.91 537.85,863.20 542.40,863.87 546.96,863.90 551.51,863.31 556.07,862.09 560.62,860.25 565.18,857.82 569.73,854.81 574.29,851.24 578.84,847.14 583.39,842.56 587.95,837.51 592.50,832.06 597.06,826.24 601.61,820.10 606.17,813.70 610.72,807.07 615.28,800.29 619.83,793.40 624.39,786.46 628.94,779.54 633.50,772.68 638.05,765.94 642.61,759.38 647.16,753.05 651.71,747.01 656.27,741.31 660.82,735.99 665.38,731.09 669.93,726.66 674.49,722.74 679.04,719.34 683.60,716.52 688.15,714.28 692.71,712.64 697.26,711.63 701.82,711.24 706.37,711.48 710.92,712.35 715.48,713.85 720.03,715.95 724.59,718.64 729.14,721.91 733.70,725.71 738.25,730.03 742.81,734.82 747.36,740.05 751.92,745.67 756.47,751.64 761.03,757.90 765.58,764.41 770.13,771.11 774.69,777.95 779.24,784.87 783.80,791.81 788.35,798.71 792.91,805.52 797.46,812.19 802.02,818.65 806.57,824.86 811.13,830.75 815.68,836.29 820.24,841.43 824.79,846.13 829.35,850.34 833.90,854.03 838.45,857.18"/>
<polyline stroke="#9467bd" points="387.55,711.24 392.10,711.80 396.65,713.47 401.21,716.23 405.76,720.04 410.32,724.84 414.87,730.56 419.43,737.11 423.98,744.41 428.54,752.34 433.09,760.79 437.65,769.64 442.20,778.74 446.76,787.98 451.31,797.21 455.87,806.30 460.42,815.11 464.97,823.53 469.53,831.41 474.08,838.65 478.64,845.14 483.19,850.79 487.75,855.51 492.30,859.24 496.86,861.91 501.41,863.49 505.97,863.96 510.52,863.31 515.08,861.55 519.63,858.70 524.18,854.81 528.74,849.93 533.29,844.14 537.85,837.51 542.40,830.16 546.96,822.18 551.51,813.70 556.07,804.83 560.62,795.70 565.18,786.46 569.73,777.24 574.29,768.17 578.84,759.38 583.39,751.01 587.95,743.17 592.50,735.99 597.06,729.56 601.61,723.99 606.17,719.34 610.72,715.70 615.28,713.12 619.83,711.63 624.39,711.25 628.94,711.99 633.50,713.85 638.05,716.78 642.61,720.76 647.16,725.71 651.71,731.58 656.27,738.26 660.82,745.67 665.38,753.70 669.93,762.22 674.49,771.11 679.04,780.25 683.60,789.49 688.15,798.71 692.71,807.76 697.26,816.52 701.82,824.86 706.37,832.64 710.92,839.77 715.48,846.13 720.03,851.63 724.59,856.19 729.14,859.75 733.70,862.24 738.25,863.64 742.81,863.93 747.36,863.09 751.92,861.15 756.47,858.13 761.03,854.07 765.58,849.04 770.13,843.11 774.69,836.36 779.24,828.89 783.80,820.82 788.35,812.27 792.91,803.35 797.46,794.20 802.02,784.95 806.57,775.74 811.13,766.71 815.68,757.98 820.24,749.68 824.79,741.95 829.35,734.88 833.90,728.59 838.45,723.16"/>
</g>
<rect x="365.5" y="703.5" width="496.0" height="168.0" fill="none" stroke="#000" stroke-width="1"/>
<g stroke="#000" stroke-width="1" font-family="'DejaVu Sans', sans-serif" font-size="13.89" letter-spacing="-0.5" fill="#000">
<line x1="388.5" y1="871.5" x2="388.5" y2="876.7"/>
<text stroke="none" text-anchor="middle" x="387.25" y="892">0.0</text>
<line x1="463.5" y1="871.5" x2="463.5" y2="876.7"/>
<text stroke="none" text-anchor="middle" x="462.40" y="892">0.5</text>
<line x1="538.5" y1="871.5" x2="538.5" y2="876.7"/>
<text stroke="none" text-anchor="middle" x="537.55" y="892">1.0</text>
<line x1="613.5" y1="871.5" x2="613.5" y2="876.7"/>
<text stroke="none" text-anchor="middle" x="612.70" y="892">1.5</text>
<line x1="688.5" y1="871.5" x2="688.5" y2="876.7"/>
<text stroke="none" text-anchor="middle" x="687.85" y="892">2.0</text>
<line x1="763.5" y1="871.5" x2="763.5" y2="876.7"/>
<text stroke="none" text-anchor="middle" x="763.00" y="892">2.5</text>
<line x1="838.5" y1="871.5" x2="838.5" y2="876.7"/>
<text stroke="none" text-anchor="middle" x="838.15" y="892">3.0</text>
<line x1="360.0" y1="863.5" x2="365.5" y2="863.5"/>
<text stroke="none" text-anchor="end" x="354.78" y="869">−1.0</text>
<line x1="360.0" y1="825.5" x2="365.5" y2="825.5"/>
<text stroke="none" text-anchor="end" x="354.78" y="831">−0.5</text>
<line x1="360.0" y1="787.5" x2="365.5" y2="787.5"/>
<text stroke="none" text-anchor="end" x="354.78" y="793">0.0</text>
<line x1="360.0" y1="749.5" x2="365.5" y2="749.5"/>
<text stroke="none" text-anchor="end" x="354.78" y="754">0.5</text>
<line x1="360.0" y1="711.5" x2="365.5" y2="711.5"/>
<text stroke="none" text-anchor="end" x="354.78" y="716">1.0</text>
</g>
</svg>
</div></div>
</body>
</html>
